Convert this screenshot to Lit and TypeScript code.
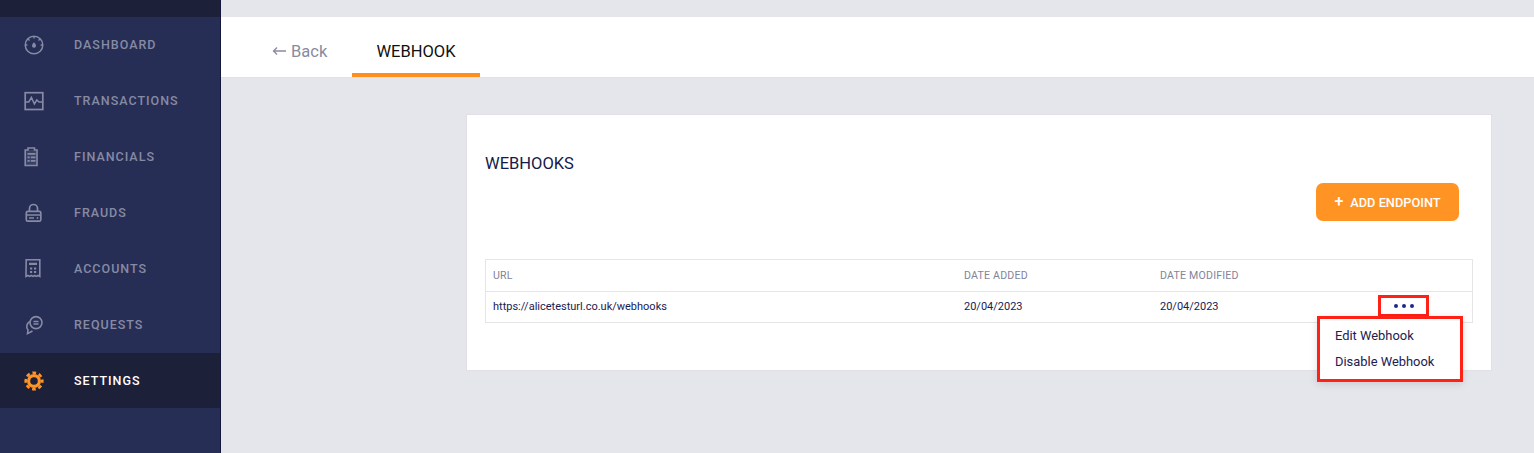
import { LitElement, html, css, svg } from "lit";
import { customElement } from "lit/decorators.js";

const icons: Record<string, unknown> = {
  dashboard: svg`<circle cx="12" cy="12" r="8.800" fill="none" stroke="currentColor" stroke-width="1.500"/><path d="M12 3.400v2.200M6 6l1.500 1.500M18 6l-1.500 1.500M3.400 12h2M18.600 12h2" stroke="currentColor" stroke-width="1.300" fill="none"/><path d="M12 9.200c1.300 1.600 2 2.500 2 3.500a2 2 0 0 1-4 0c0-1 .7-1.900 2-3.500z" fill="currentColor"/>`,
  transactions: svg`<rect x="3.200" y="3.700" width="17.600" height="16.800" fill="none" stroke="currentColor" stroke-width="1.700"/><path d="M3.200 13h3.600l2.600-4.500 3 6.500 2.400-4 2.200 2h3.800" fill="none" stroke="currentColor" stroke-width="1.500"/>`,
  financials: svg`<path d="M3 5h12.500v16H3z" fill="currentColor" opacity=".22"/><path d="M6 5V3h6.500v2h2.500v15.500H3.200V5z" fill="none" stroke="currentColor" stroke-width="1.600"/><path d="M5.500 8h8v1.800h-8zM5.500 11.500h2.200v1.800H5.500zM8.800 11.500h4.700v1.800H8.800zM5.500 15h2.200v1.800H5.500zM8.800 15h4.700v1.800H8.800z" fill="currentColor"/>`,
  frauds: svg`<path d="M7.500 10V7.500a4 4 0 0 1 8 0V10" fill="none" stroke="currentColor" stroke-width="1.700"/><rect x="4.300" y="10.300" width="14.500" height="9.900" rx="1.500" fill="none" stroke="currentColor" stroke-width="1.700"/><path d="M4.300 14h14.500" stroke="currentColor" stroke-width="1.500"/><path d="M7 17h5" stroke="currentColor" stroke-width="1.500"/><circle cx="15.500" cy="17" r=".9" fill="currentColor"/>`,
  accounts: svg`<path d="M4.200 2.800h13.600v16.600l-1.700-.9-1.700.9-1.700-.9-1.700.9-1.700-.9-1.700.9-1.700-.9-1.900.9z" fill="none" stroke="currentColor" stroke-width="1.600"/><path d="M7 5.800h8v2.200H7zM8 10.500h2.200v2H8zM12 10.500h2.200v2H12zM8 14h2.200v2H8zM12 14h2.200v2H12z" fill="currentColor"/>`,
  requests: svg`<circle cx="14" cy="9.600" r="6" fill="none" stroke="currentColor" stroke-width="1.600"/><path d="M8 8.500a5.500 5.500 0 0 0-2 8.500l-.5 3.600 5-2.600" fill="none" stroke="currentColor" stroke-width="1.600"/><path d="M11.500 8.500h5M11.500 11h5" stroke="currentColor" stroke-width="1.300"/>`,
  settings: svg`<circle cx="12" cy="12" r="7" fill="currentColor"/><circle cx="12" cy="12" r="8.300" fill="none" stroke="currentColor" stroke-width="2.600" stroke-dasharray="3.700 2.820" stroke-dashoffset="1.850"/><circle cx="12" cy="12" r="3.800" fill="#1c2039"/>`,
};

const NAV = [
  ["dashboard", "DASHBOARD"],
  ["transactions", "TRANSACTIONS"],
  ["financials", "FINANCIALS"],
  ["frauds", "FRAUDS"],
  ["accounts", "ACCOUNTS"],
  ["requests", "REQUESTS"],
  ["settings", "SETTINGS"],
];

@customElement("app-root")
export class AppRoot extends LitElement {
  static styles = css`
    :host {
      display: block;
      width: 1534px;
      height: 453px;
      overflow: hidden;
      font-family: Roboto, "Liberation Sans", sans-serif;
      background: #e5e5ec;
    }
    * { box-sizing: border-box; }
    .page { display: flex; height: 453px; }
    .side {
      width: 221px;
      flex: none;
      background: #262e56;
      border-right: 1px solid #14163a;
      padding-top: 17px;
      position: relative;
    }
    .side-top {
      position: absolute;
      inset: 0 0 auto 0;
      height: 17px;
      background: #1c2039;
    }
    .nav-item {
      height: 56px;
      display: flex;
      align-items: center;
      padding-left: 21.500px;
      gap: 28.500px;
      color: #868aa3;
      font-size: 12.500px;
      font-weight: 500;
      letter-spacing: 1px;
    }
    .nav-item span { padding-bottom: 1px; }
    .nav-item svg { width: 24px; height: 24px; flex: none; }
    .nav-item.active { background: #1c2039; color: #fff; height: 55px; }
    .nav-item.active span { padding-bottom: 0; }
    .nav-item.active svg { color: #ff9425; }
    .main { flex: 1; padding-top: 17px; min-width: 0; }
    .tabs {
      height: 60px;
      background: #fff;
      display: flex;
      box-shadow: 0 1px 0 #e0e0e6;
      padding-left: 51px;
    }
    .back {
      width: 80px;
      display: flex;
      align-items: center;
      gap: 5px;
      color: #8a8aa0;
      font-size: 16.500px;
      padding-top: 8px;
    }
    .back svg { width: 14px; height: 10px; flex: none; }
    .tab {
      width: 128px;
      display: flex;
      align-items: center;
      justify-content: center;
      color: #111;
      font-size: 16.500px;
      border-bottom: 4px solid #ff8f1c;
      height: 60px;
      padding-top: 12px;
    }
    .card {
      margin: 37px 42px 0 245px;
      height: 257px;
      background: #fff;
      border: 1px solid #e0e0e6;
      padding: 0 18px;
      position: relative;
    }
    .title {
      margin: 39px 0 0;
      font-size: 16.500px;
      font-weight: 400;
      color: #151a4a;
      line-height: 19px;
    }
    .actions { display: flex; justify-content: flex-end; margin-top: 10px; padding-right: 14px; }
    .add {
      width: 143px;
      height: 38px;
      border: none;
      border-radius: 7px;
      background: #ff9425;
      color: #fff;
      font: 500 12.800px Roboto, "Liberation Sans", sans-serif;
      display: flex;
      align-items: center;
      justify-content: center;
      gap: 7px;
      padding: 0;
    }
    .plus { font-size: 16px; font-weight: 500; line-height: 1; }
    .table { margin-top: 38px; border: 1px solid #e5e5e8; }
    .row {
      display: grid;
      grid-template-columns: 471px 196px 1fr;
      height: 31px;
      align-items: center;
      padding-left: 7px;
      font-size: 11px;
      position: relative;
    }
    .row + .row { border-top: 1px solid #e5e5e8; }
    .head { color: #83839a; font-size: 10.600px; letter-spacing: .2px; padding-bottom: 1px; }
    .body { color: #1c2050; padding-bottom: 2px; }
    .dots {
      position: absolute;
      left: 892px;
      top: 3px;
      width: 51px;
      height: 22px;
      border: 3px solid #ff2016;
      background: #fff;
      display: flex;
      align-items: center;
      justify-content: center;
      gap: 4px;
    }
    .dots i { width: 4px; height: 4px; border-radius: 50%; background: #1c2a8c; }
    .menu {
      position: absolute;
      left: 850px;
      top: 201px;
      width: 146px;
      height: 66px;
      border: 3px solid #ff2016;
      background: #fff;
      box-shadow: 0 2px 8px rgba(0,0,0,.12);
      padding: 4px 0 0 15px;
      color: #1c2050;
      font-size: 12.900px;
      line-height: 25.500px;
      z-index: 2;
    }
  `;

  render() {
    return html`<div class="page">
      <aside class="side">
        <div class="side-top"></div>
        ${NAV.map(
          ([k, label]) => html`<div class="nav-item ${k === "settings" ? "active" : ""}">
            <svg viewBox="0 0 24 24">${icons[k]}</svg><span>${label}</span>
          </div>`
        )}
      </aside>
      <main class="main">
        <div class="tabs">
          <div class="back">
            <svg viewBox="0 0 14 10"><path d="M14 5H1.500M5 1.500 1.500 5 5 8.500" fill="none" stroke="currentColor" stroke-width="1.300"/></svg>
            <span>Back</span>
          </div>
          <div class="tab">WEBHOOK</div>
        </div>
        <section class="card">
          <h2 class="title">WEBHOOKS</h2>
          <div class="actions">
            <button class="add"><span class="plus">+</span><span>ADD ENDPOINT</span></button>
          </div>
          <div class="table">
            <div class="row head"><span>URL</span><span>DATE ADDED</span><span>DATE MODIFIED</span></div>
            <div class="row body">
              <span>https://alicetesturl.co.uk/webhooks</span><span>20/04/2023</span><span>20/04/2023</span>
              <div class="dots"><i></i><i></i><i></i></div>
            </div>
          </div>
          <div class="menu"><div>Edit Webhook</div><div>Disable Webhook</div></div>
        </section>
      </main>
    </div>`;
  }
}
